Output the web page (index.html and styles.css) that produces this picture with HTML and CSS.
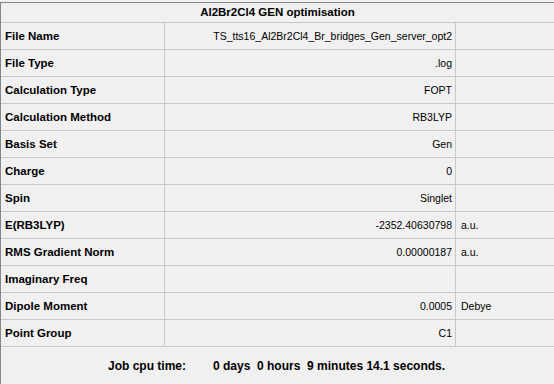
FILE: index.html
```html
<!DOCTYPE html>
<html>
<head>
<meta charset="utf-8">
<link rel="stylesheet" href="styles.css">
</head>
<body>
<div class="panel">
  <div class="title">Al2Br2Cl4 GEN optimisation</div>
  <div class="grid">
    <div class="lbl">File Name</div><div class="val">TS_tts16_Al2Br2Cl4_Br_bridges_Gen_server_opt2</div><div class="unit"></div>
    <div class="lbl">File Type</div><div class="val">.log</div><div class="unit"></div>
    <div class="lbl">Calculation Type</div><div class="val">FOPT</div><div class="unit"></div>
    <div class="lbl">Calculation Method</div><div class="val">RB3LYP</div><div class="unit"></div>
    <div class="lbl">Basis Set</div><div class="val">Gen</div><div class="unit"></div>
    <div class="lbl">Charge</div><div class="val">0</div><div class="unit"></div>
    <div class="lbl">Spin</div><div class="val">Singlet</div><div class="unit"></div>
    <div class="lbl">E(RB3LYP)</div><div class="val">-2352.40630798</div><div class="unit">a.u.</div>
    <div class="lbl">RMS Gradient Norm</div><div class="val">0.00000187</div><div class="unit">a.u.</div>
    <div class="lbl">Imaginary Freq</div><div class="val"></div><div class="unit"></div>
    <div class="lbl">Dipole Moment</div><div class="val">0.0005</div><div class="unit">Debye</div>
    <div class="lbl">Point Group</div><div class="val">C1</div><div class="unit"></div>
  </div>
  <div class="footer">
    <span class="f-label">Job cpu time:</span>
    <span class="f-value">0 days&nbsp; 0 hours&nbsp; 9 minutes 14.1 seconds.</span>
  </div>
</div>
</body>
</html>
```
FILE: styles.css
```css
html, body {
  margin: 0;
  padding: 0;
  background: #f0f0f0;
  overflow: hidden;
}
body {
  width: 554px;
  height: 384px;
  font-family: "Liberation Sans", Arial, sans-serif;
  font-size: 11.5px;
  color: #000;
}
.panel {
  margin-top: 2px;
  border-top: 1px solid #828790;
  border-left: 1px solid #828790;
  height: 382px;
  box-sizing: border-box;
  display: flex;
  flex-direction: column;
}
.title {
  height: 19px;
  line-height: 19px;
  border-bottom: 1px solid #c8c8c8;
  text-align: center;
  font-weight: bold;
}
.grid {
  display: grid;
  grid-template-columns: 164px 291px 1fr;
  grid-auto-rows: 27px;
}
.grid > div {
  box-sizing: border-box;
  border-bottom: 1px solid #c8c8c8;
  line-height: 26px;
  white-space: nowrap;
  overflow: hidden;
}
.lbl {
  border-right: 1px solid #c8c8c8;
  font-weight: bold;
  padding-left: 4px;
}
.val {
  border-right: 1px solid #c8c8c8;
  text-align: right;
  padding-right: 3px;
  font-size: 10.5px;
}
.unit {
  padding-left: 5px;
  font-size: 10.5px;
}
.footer {
  flex: 1;
  display: flex;
  align-items: center;
  font-weight: bold;
  font-size: 12px;
}
.f-label {
  margin-left: 107px;
  width: 105px;
}
```
